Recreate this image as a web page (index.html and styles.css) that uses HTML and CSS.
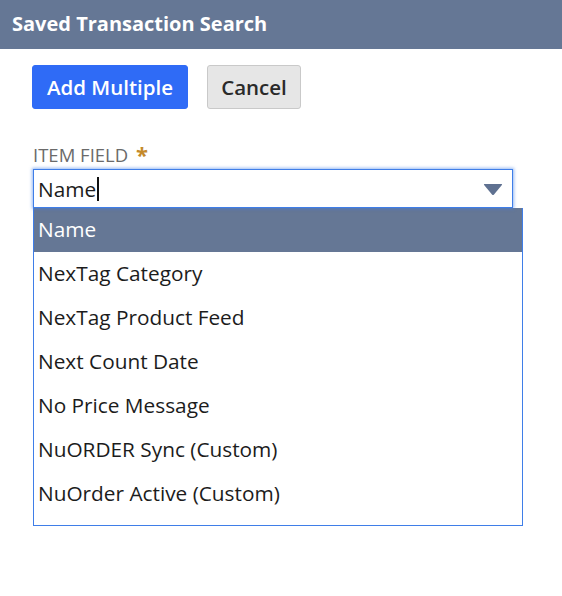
FILE: index.html
```html
<!DOCTYPE html>
<html lang="en">
<head>
<meta charset="utf-8">
<title>Saved Transaction Search</title>
<link rel="stylesheet" href="styles.css">
</head>
<body>
<div class="page">
  <header class="title-bar">Saved Transaction Search</header>
  <div class="content">
    <div class="actions">
      <button class="btn btn-primary" type="button">Add Multiple</button>
      <button class="btn btn-secondary" type="button">Cancel</button>
    </div>
    <div class="field">
      <div class="field-label">ITEM FIELD <span class="required">*</span></div>
      <div class="combo">
        <div class="combo-input">
          <span class="combo-value">Name</span><span class="caret"></span>
          <svg class="combo-arrow" width="20" height="13" viewBox="0 0 20 13" aria-hidden="true">
            <path d="M1.5 1 H18.5 Q19.6 1 18.9 2 L11 11.6 Q10 12.6 9 11.6 L1.1 2 Q0.4 1 1.5 1 Z" fill="#5f7191"/>
          </svg>
        </div>
        <ul class="combo-list">
          <li class="combo-option is-active">Name</li>
          <li class="combo-option">NexTag Category</li>
          <li class="combo-option">NexTag Product Feed</li>
          <li class="combo-option">Next Count Date</li>
          <li class="combo-option">No Price Message</li>
          <li class="combo-option">NuORDER Sync (Custom)</li>
          <li class="combo-option">NuOrder Active (Custom)</li>
        </ul>
      </div>
    </div>
  </div>
</div>
</body>
</html>
```
FILE: styles.css
```css
* { box-sizing: border-box; }
html, body { margin: 0; padding: 0; background: #fff; }
body {
  font-family: "Open Sans", "Liberation Sans", sans-serif;
  color: #222;
  width: 562px;
  height: 596px;
  overflow: hidden;
}
.title-bar {
  height: 49px;
  background: #657795;
  color: #fff;
  font-weight: 700;
  font-size: 20px;
  line-height: 48px;
  padding-left: 12px;
}
.content {
  padding: 16px 0 0 32px;
}
.actions {
  display: flex;
  gap: 19px;
}
.btn {
  font-family: inherit;
  height: 44px;
  border-radius: 3px;
  font-size: 20.5px;
  font-weight: 600;
  padding: 0;
  margin: 0;
}
.btn-primary {
  width: 156px;
  background: #2f6bf6;
  color: #fff;
  border: 1px solid #2f6bf6;
}
.btn-secondary {
  width: 94px;
  background: #e6e6e6;
  color: #2a2a2a;
  border: 1px solid #c9c9c9;
}
.field {
  margin-top: 33px;
}
.field-label {
  font-size: 18.5px;
  color: #6a6a6a;
  line-height: 26px;
  padding-left: 1px;
  height: 27px;
}
.required {
  color: #c48a2a;
  font-weight: 700;
  font-size: 22px;
  margin-left: 3px;
  vertical-align: -1px;
  line-height: 0;
}
.combo {
  width: 490px;
}
.combo-input {
  position: relative;
  width: 480px;
  height: 39px;
  border: 1px solid #3f7ee8;
  box-shadow: 0 0 3px 1px rgba(63, 126, 232, 0.55);
  background: #fff;
  display: flex;
  align-items: center;
  padding-left: 4px;
  padding-top: 1px;
  font-size: 20.8px;
  color: #1c1c1c;
  margin-left: 1px;
}
.caret {
  display: inline-block;
  width: 1.5px;
  height: 24px;
  background: #111;
  margin-left: 1px;
}
.combo-arrow {
  position: absolute;
  right: 9px;
  top: 13px;
}
.combo-list {
  list-style: none;
  margin: 0 0 0 1px;
  padding: 0 0 9px 0;
  width: 490px;
  border: 1px solid #3f7ee8;
  border-top: none;
  background: #fff;
}
.combo-option {
  height: 44px;
  line-height: 43px;
  padding-left: 4px;
  font-size: 20.8px;
  color: #1c1c1c;
}
.combo-option.is-active {
  background: #657795;
  color: #fff;
}
```
